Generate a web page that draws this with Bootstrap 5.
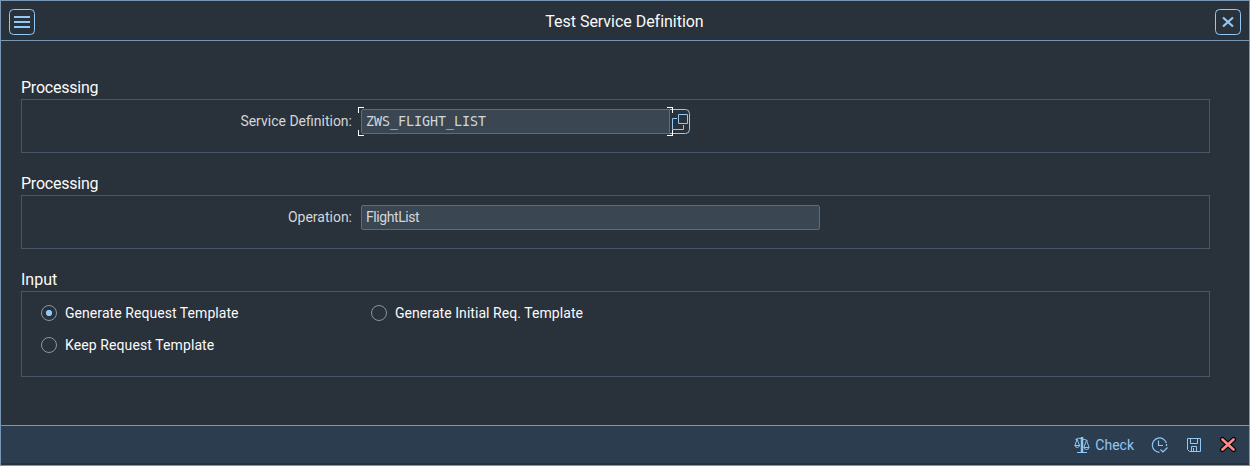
<!DOCTYPE html>
<html lang="en">
<head>
<meta charset="utf-8">
<meta name="viewport" content="width=device-width, initial-scale=1">
<title>Test Service Definition</title>
<link rel="stylesheet" href="https://cdn.jsdelivr.net/npm/bootstrap@5.3.0/dist/css/bootstrap.min.css">
<style>
body{background:#29313a;color:#fafafa;font-family:Roboto,"Noto Sans",sans-serif;font-size:14px;line-height:20px}
.dialog{height:466px;border:1px solid #7996b5;padding-bottom:2px;overflow:hidden}
.title-bar{height:40px;border-bottom:1px solid #7996b5;padding:2px 7px 0 8px}
.title-bar h1{font-size:16px;line-height:20px;font-weight:400;letter-spacing:-.03px;padding-right:2px}
.tool{width:27px;height:27px;margin-top:2px;border:0;padding:0;background:none;color:#91c8f6}
.tool svg,.foot svg,.help svg{display:block}
.content{padding:35px 39px 0 20px}
.group-title{font-size:16px;line-height:20px;height:23px;padding-top:2px;margin:0;font-weight:400;letter-spacing:-.22px}
.group-title.wide{letter-spacing:0}
.group{border:1px solid #475767;height:54px;margin-bottom:19px;padding-top:9px}
.group.options{height:86px;padding:9px 0 0 19px}
.field-label{width:330px;color:#d3d7da;line-height:25px;margin-right:9px}
.field{height:25px;border:1px solid #596d81;border-radius:2px;background:#3a4652;color:#d3d7da;padding:0 4px;line-height:23px}
.service{width:309px;font-family:"DejaVu Sans Mono",monospace;border-radius:2px 0 0 2px;font-size:13.3px}
.operation{width:459px;letter-spacing:-.42px}
.corner{position:absolute;width:6px;height:6px;border:0 solid #fff}
.corner.border-top{border-top-color:#fff!important}
.corner.border-bottom{border-bottom-color:#fff!important}
.corner.border-start{border-left-color:#fff!important}
.corner.border-end{border-right-color:#fff!important}
.help{width:20px;height:25px;padding:0;border:0;background:none}
.option{width:330px;height:24px;margin-bottom:8px;gap:8px;letter-spacing:.06px}
.option.keep{letter-spacing:.1px}
.option input{appearance:none;width:16px;height:16px;margin:0;border:1px solid #8396a8;border-radius:50%}
.option input:checked{background:radial-gradient(circle,#91c8f6 0 2.8px,transparent 3.4px)}
.foot{height:38px;border-top:1px solid #7996b5;background:#2c3d4f;color:#91c8f6;padding:1px 12px 0 0}
.foot button{border:0;background:none;padding:0;color:inherit}
</style>
</head>
<body>
<main class="dialog d-flex flex-column">
  <header class="title-bar d-flex align-items-center justify-content-between">
    <button class="tool" aria-label="Menu"><svg width="27" height="27" fill="none" stroke="currentColor"><rect x=".5" y=".5" width="25" height="25" rx="4"/><path d="M5 8h16M5 13h16M5 18h16" stroke-width="2"/></svg></button>
    <h1 class="mb-0"><span>Test Service Definition</span></h1>
    <button class="tool" aria-label="Close"><svg width="27" height="27" fill="none" stroke="currentColor"><rect x=".5" y=".5" width="25" height="25" rx="4"/><path d="M8 8.500l10 9M18 8.500l-10 9" stroke-width="2.300"/></svg></button>
  </header>
  <div class="content flex-grow-1">
    <h2 class="group-title"><span>Processing</span></h2>
    <section class="group d-flex align-items-start">
      <label class="field-label text-end"><span>Service Definition:</span></label>
      <div class="position-relative d-flex">
        <div class="field service"><span>ZWS_FLIGHT_LIST</span></div>
        <button class="help" aria-label="Value help"><svg width="20" height="25" fill="none" stroke="#91c8f6"><path d="M0 .5h15.500q4 0 4 4v16q0 4-4 4H0"/><path d="M8.500 5.500h9v9h-9zM7 9.500H2.500v11h11V16"/></svg></button>
        <i class="corner border-top border-start" style="left:-3px;top:-2px"></i>
        <i class="corner border-bottom border-start" style="left:-3px;bottom:-2px"></i>
        <i class="corner border-top border-end" style="left:306px;top:-2px"></i>
        <i class="corner border-bottom border-end" style="left:306px;bottom:-2px"></i>
      </div>
    </section>
    <h2 class="group-title"><span>Processing</span></h2>
    <section class="group d-flex align-items-start">
      <label class="field-label text-end"><span>Operation:</span></label>
      <div class="field operation"><span>FlightList</span></div>
    </section>
    <h2 class="group-title wide"><span>Input</span></h2>
    <section class="group options d-flex flex-wrap align-content-start">
      <label class="option d-flex align-items-center"><input type="radio" name="template" checked><span>Generate Request Template</span></label>
      <label class="option d-flex align-items-center"><input type="radio" name="template"><span>Generate Initial Req. Template</span></label>
      <div class="w-100"></div>
      <label class="option keep d-flex align-items-center"><input type="radio" name="template"><span>Keep Request Template</span></label>
    </section>
  </div>
  <footer class="foot d-flex align-items-center justify-content-end">
    <button class="d-flex align-items-center" style="gap:5px;margin-right:17px"><svg width="16" height="18" fill="none" stroke="currentColor"><path d="M1.500 3.500q3-2 6-1t6 2M3 16.500h10M3 3L1 9.500M3 3l2.500 6.500M.5 9.500h5.500M1 10.500q2.200 2 4.500 0M12.500 4.500L10 11M12.500 4.500L15 11M9.500 11.500h6M10 12.500q2.500 2 5 0"/><path d="M8 1v15" stroke-width="2.500"/></svg><span>Check</span></button>
    <button aria-label="Schedule" style="margin-right:17px"><svg width="18" height="18" fill="none" stroke="currentColor" stroke-width="1.200"><path d="M15.400 7A7.200 7.200 0 1 0 8.500 16.300M15.500 8v2M7.500 4.500v5H12M9.500 13.500l2.500 2.500 4.500-4.500"/></svg></button>
    <button aria-label="Save" style="margin-right:17px"><svg width="16" height="16" fill="none" stroke="currentColor"><path d="M1.500 1.500h13v13H3.500l-2-2zM4.500 1.500v5h7v-5M5.500 14.500v-5h5v5M7.500 11v3"/></svg></button>
    <button aria-label="Cancel"><svg width="18" height="18" fill="none" stroke-linecap="round"><path d="M3.500 3.500l11 10M14.500 3.500l-11 10" stroke="#000" stroke-width="5"/><path d="M3.500 3.500l11 10M14.500 3.500l-11 10" stroke="#ff8888" stroke-width="2.700"/></svg></button>
  </footer>
</main>
<script src="https://cdn.jsdelivr.net/npm/bootstrap@5.3.0/dist/js/bootstrap.bundle.min.js"></script>
</body>
</html>
